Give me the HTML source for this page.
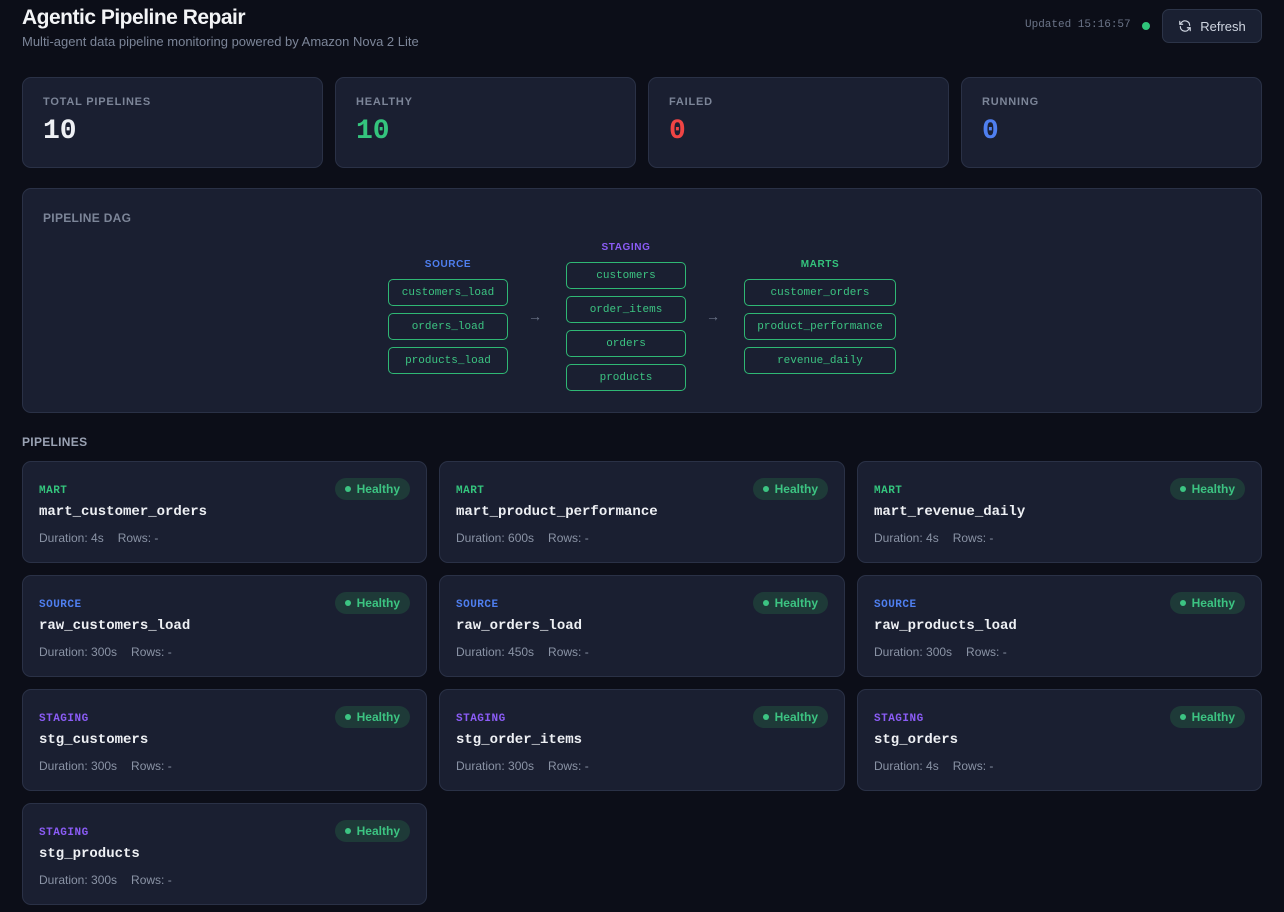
<!DOCTYPE html>
<html><head><style>
*{box-sizing:border-box;margin:0;padding:0}
body{width:1284px;height:912px;background:#0c0e18;font-family:"Liberation Sans",sans-serif;color:#e5e7eb;position:relative;overflow:hidden}
.abs{position:absolute}
h1{position:absolute;left:22px;top:6px;font-size:21px;font-weight:bold;letter-spacing:-0.5px;color:#f3f4f6}
.sub{left:22px;top:34px;font-size:13px;color:#7c8598}
.upd{left:1025px;top:19px;font-family:"Liberation Mono",monospace;font-size:11px;color:#6b7488}
.dot{width:8px;height:8px;border-radius:50%;background:#2fc57a}
.btn{left:1162px;top:9px;width:100px;height:34px;border:1px solid #2c3448;border-radius:7px;background:#1a2032;color:#cfd5e0;font-size:13px;display:flex;align-items:center;justify-content:center;gap:8px}
.card{position:absolute;background:#1a1f31;border:1px solid #2a3146;border-radius:9px}
.slabel{position:absolute;left:20px;top:18px;font-size:11px;font-weight:bold;letter-spacing:0.8px;color:#7c8598}
.sval{position:absolute;left:20px;top:38px;font-family:"Liberation Mono",monospace;font-size:28px;font-weight:bold}
.node{position:absolute;height:27px;border:1px solid #2fb774;border-radius:5px;font-family:"Liberation Mono",monospace;font-size:11px;color:#3cc482;display:flex;align-items:center;justify-content:center}
.col{position:absolute;font-size:10px;font-weight:bold;letter-spacing:0.6px;text-align:center}
.arr{position:absolute;color:#6b7488;font-size:14px}
.pk{position:absolute;left:16px;top:23px;font-family:"Liberation Mono",monospace;font-size:11px;font-weight:bold;letter-spacing:0.5px}
.pn{position:absolute;left:16px;top:42px;font-family:"Liberation Mono",monospace;font-size:14px;font-weight:bold;color:#eef0f4}
.pm{position:absolute;left:16px;top:69px;font-size:12px;color:#8a93a5}
.pm span{margin-left:14px}
.badge{position:absolute;right:16px;top:16px;height:22px;padding:0 10px;border-radius:11px;background:#1e3a38;color:#3cc482;font-size:12px;font-weight:bold;display:flex;align-items:center;gap:6px}
.badge i{width:6px;height:6px;border-radius:50%;background:#3cc482;display:block}
</style></head><body>
<h1>Agentic Pipeline Repair</h1>
<div class="abs sub">Multi-agent data pipeline monitoring powered by Amazon Nova 2 Lite</div>
<div class="abs upd">Updated 15:16:57</div>
<div class="abs dot" style="left:1142px;top:22px"></div>
<div class="abs btn"><svg width="14" height="14" viewBox="0 0 24 24" fill="none" stroke="#cfd5e0" stroke-width="2" stroke-linecap="round"><path d="M20 11a8 8 0 0 0-14.5-4.5L3 9M3 4v5h5M4 13a8 8 0 0 0 14.5 4.5L21 15M21 20v-5h-5"/></svg>Refresh</div>

<div class="card" style="left:22px;top:77px;width:301px;height:91px"><div class="slabel">TOTAL PIPELINES</div><div class="sval" style="color:#eef0f4">10</div></div>
<div class="card" style="left:335px;top:77px;width:301px;height:91px"><div class="slabel">HEALTHY</div><div class="sval" style="color:#34c47d">10</div></div>
<div class="card" style="left:648px;top:77px;width:301px;height:91px"><div class="slabel">FAILED</div><div class="sval" style="color:#ef4444">0</div></div>
<div class="card" style="left:961px;top:77px;width:301px;height:91px"><div class="slabel">RUNNING</div><div class="sval" style="color:#4f7ff0">0</div></div>

<div class="card" style="left:22px;top:188px;width:1240px;height:225px">
<div class="slabel" style="top:22px;font-size:12px;letter-spacing:0.3px">PIPELINE DAG</div>
</div>
<div class="col" style="left:388px;top:259px;width:120px;color:#4f7ff0">SOURCE</div>
<div class="node" style="left:388px;top:279px;width:120px">customers_load</div>
<div class="node" style="left:388px;top:313px;width:120px">orders_load</div>
<div class="node" style="left:388px;top:347px;width:120px">products_load</div>
<div class="arr" style="left:528px;top:308px">&rarr;</div>
<div class="col" style="left:566px;top:242px;width:120px;color:#8b5cf6">STAGING</div>
<div class="node" style="left:566px;top:262px;width:120px">customers</div>
<div class="node" style="left:566px;top:296px;width:120px">order_items</div>
<div class="node" style="left:566px;top:330px;width:120px">orders</div>
<div class="node" style="left:566px;top:364px;width:120px">products</div>
<div class="arr" style="left:706px;top:308px">&rarr;</div>
<div class="col" style="left:744px;top:259px;width:152px;color:#34c47d">MARTS</div>
<div class="node" style="left:744px;top:279px;width:152px">customer_orders</div>
<div class="node" style="left:744px;top:313px;width:152px">product_performance</div>
<div class="node" style="left:744px;top:347px;width:152px">revenue_daily</div>

<div class="abs" style="left:22px;top:435px;font-size:12px;font-weight:bold;color:#9aa2b3;letter-spacing:0.3px">PIPELINES</div>

<div class="card" style="left:22px;top:461px;width:405px;height:102px"><div class="pk" style="color:#34c47d">MART</div><div class="badge"><i></i>Healthy</div><div class="pn">mart_customer_orders</div><div class="pm">Duration: 4s<span>Rows: -</span></div></div>
<div class="card" style="left:439px;top:461px;width:406px;height:102px"><div class="pk" style="color:#34c47d">MART</div><div class="badge"><i></i>Healthy</div><div class="pn">mart_product_performance</div><div class="pm">Duration: 600s<span>Rows: -</span></div></div>
<div class="card" style="left:857px;top:461px;width:405px;height:102px"><div class="pk" style="color:#34c47d">MART</div><div class="badge"><i></i>Healthy</div><div class="pn">mart_revenue_daily</div><div class="pm">Duration: 4s<span>Rows: -</span></div></div>

<div class="card" style="left:22px;top:575px;width:405px;height:102px"><div class="pk" style="color:#4f7ff0">SOURCE</div><div class="badge"><i></i>Healthy</div><div class="pn">raw_customers_load</div><div class="pm">Duration: 300s<span>Rows: -</span></div></div>
<div class="card" style="left:439px;top:575px;width:406px;height:102px"><div class="pk" style="color:#4f7ff0">SOURCE</div><div class="badge"><i></i>Healthy</div><div class="pn">raw_orders_load</div><div class="pm">Duration: 450s<span>Rows: -</span></div></div>
<div class="card" style="left:857px;top:575px;width:405px;height:102px"><div class="pk" style="color:#4f7ff0">SOURCE</div><div class="badge"><i></i>Healthy</div><div class="pn">raw_products_load</div><div class="pm">Duration: 300s<span>Rows: -</span></div></div>

<div class="card" style="left:22px;top:689px;width:405px;height:102px"><div class="pk" style="color:#8b5cf6">STAGING</div><div class="badge"><i></i>Healthy</div><div class="pn">stg_customers</div><div class="pm">Duration: 300s<span>Rows: -</span></div></div>
<div class="card" style="left:439px;top:689px;width:406px;height:102px"><div class="pk" style="color:#8b5cf6">STAGING</div><div class="badge"><i></i>Healthy</div><div class="pn">stg_order_items</div><div class="pm">Duration: 300s<span>Rows: -</span></div></div>
<div class="card" style="left:857px;top:689px;width:405px;height:102px"><div class="pk" style="color:#8b5cf6">STAGING</div><div class="badge"><i></i>Healthy</div><div class="pn">stg_orders</div><div class="pm">Duration: 4s<span>Rows: -</span></div></div>

<div class="card" style="left:22px;top:803px;width:405px;height:102px"><div class="pk" style="color:#8b5cf6">STAGING</div><div class="badge"><i></i>Healthy</div><div class="pn">stg_products</div><div class="pm">Duration: 300s<span>Rows: -</span></div></div>
</body></html>
